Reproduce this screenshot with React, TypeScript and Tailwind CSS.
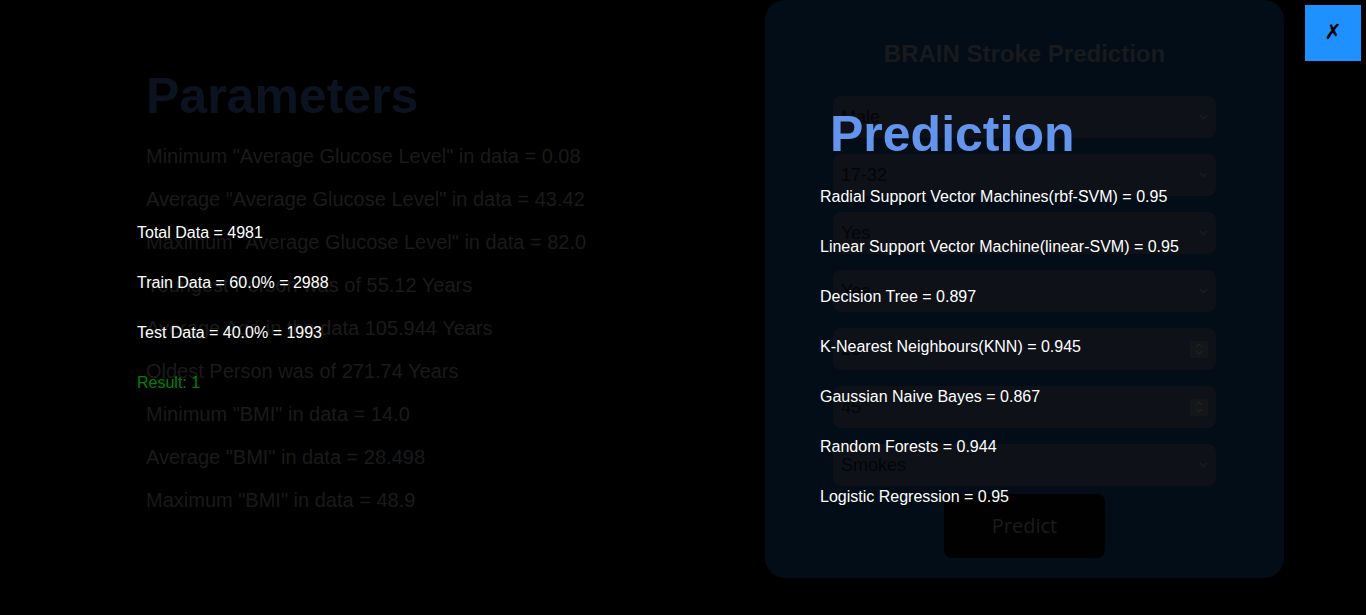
import React from "react";

const params = [
  'Minimum "Average Glucose Level" in data = 0.08',
  'Average "Average Glucose Level" in data = 43.42',
  'Maximum "Average Glucose Level" in data = 82.0',
  "Youngest Person was of 55.12 Years",
  "Average Age in the data 105.944 Years",
  "Oldest Person was of 271.74 Years",
  'Minimum "BMI" in data = 14.0',
  'Average "BMI" in data = 28.498',
  'Maximum "BMI" in data = 48.9',
];

const fields: { value: string; kind: "select" | "number" }[] = [
  { value: "Male", kind: "select" },
  { value: "17-32", kind: "select" },
  { value: "Yes", kind: "select" },
  { value: "Yes", kind: "select" },
  { value: "25", kind: "number" },
  { value: "45", kind: "number" },
  { value: "Smokes", kind: "select" },
];

const models = [
  "Radial Support Vector Machines(rbf-SVM) = 0.95",
  "Linear Support Vector Machine(linear-SVM) = 0.95",
  "Decision Tree = 0.897",
  "K-Nearest Neighbours(KNN) = 0.945",
  "Gaussian Naive Bayes = 0.867",
  "Random Forests = 0.944",
  "Logistic Regression = 0.95",
];

function Chevron() {
  return (
    <svg width="9" height="6" viewBox="0 0 9 6" className="shrink-0">
      <path d="M1 1 L4.5 4.5 L8 1" fill="none" stroke="#1b1d22" strokeWidth="1.3" />
    </svg>
  );
}

function Spinner() {
  return (
    <div className="w-[18px] h-[17px] bg-[#15161a] flex flex-col items-center justify-center gap-[2px]">
      <svg width="8" height="5" viewBox="0 0 8 5">
        <path d="M1 4 L4 1 L7 4" fill="none" stroke="#23252a" strokeWidth="1" />
      </svg>
      <svg width="8" height="5" viewBox="0 0 8 5">
        <path d="M1 1 L4 4 L7 1" fill="none" stroke="#23252a" strokeWidth="1" />
      </svg>
    </div>
  );
}

export default function App() {
  return (
    <div
      className="relative w-[1366px] h-[615px] bg-black overflow-hidden"
      style={{ fontFamily: '"Liberation Sans", Arial, sans-serif' }}
    >
      {/* underlying page (dimmed) */}
      <div className="flex w-full h-full">
        <div className="w-[765px] pl-[146px] pt-[71px] shrink-0">
          <h1 className="text-[50px] leading-none font-bold text-[#0b1320]">Parameters</h1>
          <div className="mt-[14px] flex flex-col">
            {params.map((p, i) => (
              <div key={i} className="text-[20px] leading-[43px] text-[#1a1a1a] whitespace-nowrap">
                {p}
              </div>
            ))}
          </div>
        </div>
        <div className="w-[519px] h-[578px] shrink-0 rounded-[20px] bg-[#030d17] pt-[42px] flex flex-col items-center">
          <h2 className="text-[24px] leading-none font-bold text-[#181a1d]">BRAIN Stroke Prediction</h2>
          <div className="mt-[30px] flex flex-col gap-[16px] w-[383px]">
            {fields.map((f, i) => (
              <div
                key={i}
                className="h-[42px] rounded-[8px] bg-[#0e1118] flex items-center justify-between pl-[8px] pr-[8px]"
              >
                <span className="text-[18px] text-[#040506]">{f.value}</span>
                {f.kind === "select" ? <Chevron /> : <Spinner />}
              </div>
            ))}
          </div>
          <div
            className="mt-[8px] w-[161px] h-[64px] rounded-[8px] bg-[#010101] flex items-center justify-center text-[20px] text-[#1b1b1b]"
            style={{ fontFamily: '"Open Sans", sans-serif' }}
          >
            Predict
          </div>
        </div>
      </div>

      {/* modal overlay */}
      <div className="absolute inset-0 flex">
        <div className="w-[820px] pl-[137px] pt-[208px] shrink-0 flex flex-col">
          <div className="text-[16px] leading-[50px] text-white">Total Data = 4981</div>
          <div className="text-[16px] leading-[50px] text-white">Train Data = 60.0% = 2988</div>
          <div className="text-[16px] leading-[50px] text-white">Test Data = 40.0% = 1993</div>
          <div className="text-[16px] leading-[50px] text-[#008000]">Result: 1</div>
        </div>
        <div className="pt-[109px] flex flex-col">
          <h2 className="pl-[10px] text-[50px] leading-none font-bold text-[#6495ed]">Prediction</h2>
          <div className="mt-[13px] flex flex-col">
            {models.map((m, i) => (
              <div key={i} className="text-[16px] leading-[50px] text-white whitespace-nowrap">
                {m}
              </div>
            ))}
          </div>
        </div>
      </div>

      <button
        className="absolute top-[5px] right-[5px] w-[56px] h-[56px] bg-[#1e90ff] flex items-center justify-center text-[21px] text-black"
        style={{ fontFamily: '"DejaVu Sans", sans-serif' }}
      >
        ✗
      </button>
    </div>
  );
}
